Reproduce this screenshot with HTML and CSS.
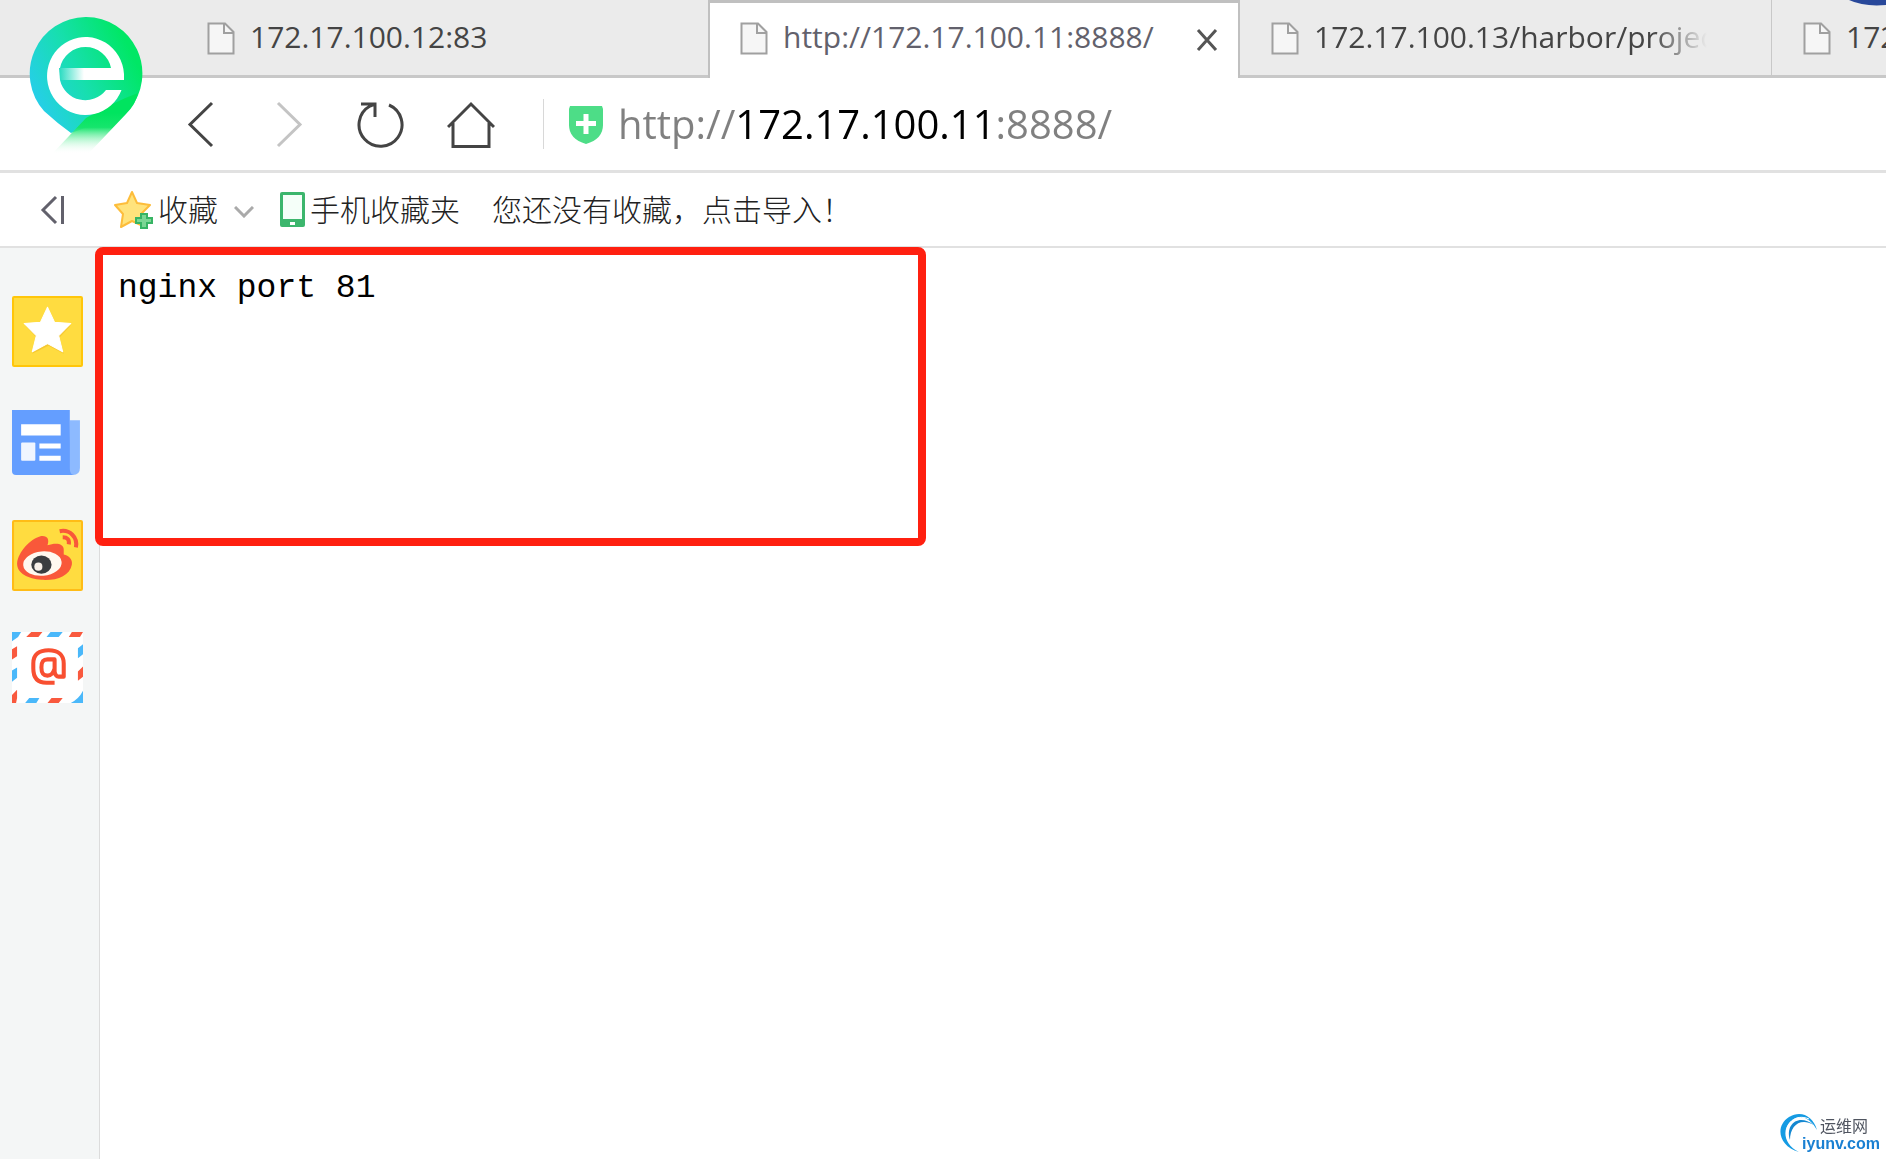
FILE: index.html
```html
<!DOCTYPE html>
<html lang="zh-CN">
<head>
<meta charset="utf-8">
<meta name="viewport" content="width=device-width, initial-scale=1">
<title>http://172.17.100.11:8888/</title>
<link rel="stylesheet" href="styles.css">
</head>
<body>
<svg class="defs" width="0" height="0" aria-hidden="true">
  <symbol id="file" viewBox="0 0 28 33">
    <path d="M1.500 1.500H18L26.500 10V31.500H1.500Z" fill="#f6f6f6" stroke="#a0a0a0" stroke-width="2"/>
    <path d="M17 2V11H26" fill="none" stroke="#a0a0a0" stroke-width="2"/>
  </symbol>
</svg>

<header class="browser">
  <svg class="logo" viewBox="0 0 116 144" role="img" aria-label="浏览器">
    <defs>
      <linearGradient id="pin" x1="0" y1="1" x2="1" y2="0.500">
        <stop offset="0" stop-color="#2cc8ff"/><stop offset="0.550" stop-color="#17dfae"/><stop offset="1" stop-color="#00e765"/>
      </linearGradient>
      <linearGradient id="tail" x1="0" y1="96" x2="0" y2="137" gradientUnits="userSpaceOnUse">
        <stop offset="0" stop-color="#00e45f"/><stop offset="0.350" stop-color="#16e56c"/><stop offset="1" stop-color="#fff" stop-opacity="0"/>
      </linearGradient>
      <linearGradient id="bar" x1="0" x2="1"><stop offset="0" stop-color="#25dbc0"/><stop offset="1" stop-color="#fff"/></linearGradient>
    </defs>
    <path d="M57.500 0A56.500 56.500 0 0 1 101 93Q90 104 76 104L43 116Q29 106 16 94A56.500 56.500 0 0 1 57.500 0Z" fill="url(#pin)"/>
    <path d="M58 101Q88 84 110 76Q108 87 98 97L60 137H24Z" fill="url(#tail)"/>
    <path fill-rule="evenodd" fill="#fff" d="M96 63V57A38.500 39 0 1 0 93.500 73H78A26 26 0 0 1 32 63ZM32 51A26 26 0 0 1 83 51Z"/>
    <path d="M31 51H56V63H32Z" fill="url(#bar)"/>
  </svg>
  <svg class="avatar" viewBox="0 0 40 6" aria-hidden="true"><path d="M3 0Q18 7 40 5V0Z" fill="#28489a"/></svg>

  <nav class="tabs">
    <a class="tab first" href="#"><svg class="page"><use href="#file"/></svg><span class="title">172.17.100.12:83</span></a>
    <div class="tab active">
      <svg class="page"><use href="#file"/></svg><span class="title">http://172.17.100.11:8888/</span>
      <button class="close" aria-label="关闭标签页"><svg viewBox="0 0 22 22"><path d="M2 1L20 21M20 1L2 21" stroke="#555" stroke-width="3" fill="none"/></svg></button>
    </div>
    <a class="tab long" href="#"><svg class="page"><use href="#file"/></svg><span class="title fade">172.17.100.13/harbor/projects</span></a>
    <a class="tab last" href="#"><svg class="page"><use href="#file"/></svg><span class="title">172.17.100.14</span></a>
  </nav>

  <div class="toolbar">
    <div class="buttons">
      <button aria-label="后退"><svg viewBox="0 0 48 48"><path d="M38 3L16 24.500L38 46"/></svg></button>
      <button aria-label="前进" disabled><svg viewBox="0 0 48 48"><path d="M13 3L35 24.500L13 46"/></svg></button>
      <button aria-label="刷新"><svg viewBox="0 0 48 48"><path d="M33 5A21.500 21.500 0 1 1 14 6L19 4M5 4H19V17"/></svg></button>
      <button aria-label="主页"><svg viewBox="0 0 48 48"><path d="M1 27L24 4L47 27M6 23V46.500H42V23"/></svg></button>
    </div>
    <div class="address">
      <svg class="shield" viewBox="0 0 36 39" aria-hidden="true"><path d="M2 1H34L35 4V20Q35 34 18 39Q1 34 1 20V4Z" fill="#4ddd87"/><path d="M18 9V29M8 18.500H28" stroke="#fff" stroke-width="5"/></svg>
      <input class="url" type="text" aria-label="地址" value="http://172.17.100.11:8888/">
    </div>
  </div>

  <div class="bookmarks">
    <button class="collapse" aria-label="收起"><svg viewBox="0 0 26 30"><path d="M16 2L3 15L16 28" fill="none" stroke="#62616c" stroke-width="3"/><path d="M22.500 1V29" stroke="#62616c" stroke-width="3"/></svg></button>
    <button class="mark fav">
      <svg class="star" viewBox="0 0 40 40" aria-hidden="true"><path d="M18 2L23 13L36 15L27 24L29 36L18 31L7 37L9 24L1 15L13 13Z" fill="#ffe37c" stroke="#fdbd3b" stroke-width="2" stroke-linejoin="round"/><path d="M27 24H33V28H38V33H33V38H27V33H22V28H27Z" fill="#7bd694" stroke="#37b464" stroke-width="2"/></svg>
      <span>收藏</span>
      <svg class="chevron" viewBox="0 0 20 12" aria-hidden="true"><path d="M1 1L10 10L19 1" fill="none" stroke="#aaa" stroke-width="3"/></svg>
    </button>
    <button class="mark mobile">
      <svg class="phone" viewBox="0 0 25 35" aria-hidden="true"><rect width="25" height="35" rx="2" fill="#3cb66d"/><rect x="3" y="3" width="19" height="24" fill="#f5fff9"/><rect x="10" y="30" width="5" height="3" fill="#fff"/></svg>
      <span>手机收藏夹</span>
    </button>
    <a class="mark import" href="#">您还没有收藏，点击导入！</a>
  </div>
</header>

<div class="body">
  <aside class="side">
    <button aria-label="收藏夹"><svg viewBox="0 0 70 70"><rect x="1" y="1" width="68" height="68" rx="1" fill="#ffdc40" stroke="#ffc60a" stroke-width="2"/><path d="M36 14L42 27L58 29L47 41L51 57L36 49L20 57L24 41L13 29L29 27Z" fill="#e9ad1c" opacity=".4"/><path d="M35 11L42 26L58 27L46 39L50 55L35 47L20 55L24 39L12 27L28 26Z" fill="#fff" stroke="#fff" stroke-linejoin="round"/></svg></button>
    <button aria-label="新闻"><svg viewBox="0 0 70 70"><path d="M57 12H67V59Q67 66 60 66H55Z" fill="#8dbaff"/><path d="M0 2H57V60Q57 66 61 66H4Q0 66 0 62Z" fill="#649eff"/><path d="M9 16H48V27H9ZM27 35H48V40H27ZM27 47H48V52H27Z" fill="#fff"/><rect x="9" y="34" width="14" height="18" rx="1" fill="#f0f5ff"/></svg></button>
    <button aria-label="微博"><svg viewBox="0 0 70 70"><rect x="1" y="1" width="68" height="68" rx="1" fill="#ffdc40" stroke="#ffbc16" stroke-width="2"/><path d="M5 43C6 31 18 19 28 16C35 15 37 19 35 25C43 22 51 23 51 29V34C56 35 60 39 59 44C57 55 44 60 29 59C16 58 5 53 5 43Z" fill="#f9583a"/><ellipse cx="30" cy="43" rx="19" ry="12" fill="#fff8ef" transform="rotate(-5 30 43)"/><ellipse cx="29" cy="44" rx="10" ry="9" fill="#3b3d40"/><circle cx="26" cy="46" r="4" fill="#f8f0e8"/><path d="M47 11C57 9 65 17 63 27M50 17Q57 17 56 24" fill="none" stroke="#f9583a" stroke-width="4"/></svg></button>
    <button aria-label="邮箱"><svg viewBox="0 0 70 70"><rect width="70" height="70" fill="#fff"/><path d="M0 0H9L6 5L0 9ZM38 0H50L46 5H34ZM70 12V22L65 26V16ZM0 38L5 35V45L0 49ZM17 65H27L24 70H13ZM70 58V70H58Q66 66 70 58Z" fill="#4ab8fa"/><path d="M19 0H30L26 5H14ZM59 0H70L67 5H56ZM70 34V44L65 48V39ZM0 17L5 14V24L0 27ZM0 62L5 57V65L4 70H0ZM39 65H50L46 70H35Z" fill="#f9593e"/><path d="M42 50H34C24 50 21 44 21 36V31C21 22 27 18 36 18C46 18 51 23 51 31V44H46Q43 44 42 39V27H35C30 27 29 30 29 35C29 41 31 43 35 43C39 43 41 40 42 36" fill="none" stroke="#f84f31" stroke-width="4" stroke-linejoin="round"/></svg></button>
  </aside>
  <main class="content">
    <pre>nginx port 81</pre>
    <div class="highlight"></div>
  </main>
</div>

<a class="watermark" href="#">
  <svg viewBox="0 0 38 40" aria-hidden="true"><path d="M19 39C-2 33-5 13 9 4C21-3 33 3 37 17C30 4 19 0 10 9C2 17 4 32 19 39Z" fill="#159be3"/><path d="M7 24C4 11 15 0 29 6" fill="none" stroke="#fff"/><path d="M10 27C5 12 18 0 34 12C20 4 10 13 10 27Z" fill="#1488d1"/></svg>
  <span class="cn">运维网</span>
  <span class="en">iyunv.com</span>
</a>
</body>
</html>
```
FILE: styles.css
```css
* { box-sizing: border-box; }
body {
  margin: 0;
  min-height: 100vh;
  display: flex;
  flex-direction: column;
  background: #fff;
  color: #444;
  font-family: "Open Sans", "Noto Sans CJK SC", sans-serif;
  font-size: 30px;
  overflow: hidden;
}
button {
  display: flex;
  align-items: center;
  padding: 0;
  border: 0;
  background: none;
  color: inherit;
  font: inherit;
}
a { color: inherit; text-decoration: none; }
svg { display: block; flex: none; }
.defs { position: absolute; }
.browser { position: relative; }
.logo { position: absolute; left: 28px; top: 17px; width: 116px; height: 144px; }
.avatar { position: absolute; right: 0; top: 0; width: 40px; height: 6px; }

/* Tab strip */
.tabs { display: flex; height: 78px; background: #ebebeb; overflow: hidden; }
.tab {
  display: flex;
  flex: none;
  gap: 15px;
  width: 532px;
  padding: 16px 32px 0 31px;
  line-height: 42px;
  border-bottom: 3px solid #c8c8c8;
}
.page { width: 28px; height: 33px; margin-top: 6px; }
.title { white-space: nowrap; }
.tab.first { padding-left: 207px; width: 708px; }
.tab.active {
  padding: 13px 20px 0 30px;
  color: #62616c;
  background: #fff;
  border: 2px solid #c0c0c0;
  border-top-width: 3px;
  border-bottom: 0;
}
.close { margin: 13px 0 0 auto; height: 22px; }
.close svg { width: 22px; height: 22px; }
.fade {
  flex: 1;
  overflow: hidden;
  -webkit-mask-image: linear-gradient(to right, #000 86%, transparent);
  mask-image: linear-gradient(to right, #000 86%, transparent);
}
.tab.long { padding-right: 64px; border-right: 1px solid #c8c8c8; }

/* Toolbar */
.toolbar { display: flex; align-items: center; height: 95px; padding-left: 174px; border-bottom: 3px solid #e1e1e1; }
.buttons { display: flex; gap: 43px; padding-right: 48px; border-right: 1px solid #d8d8d8; height: 50px; align-items: center; }
.buttons svg { width: 48px; height: 48px; fill: none; stroke: #444; stroke-width: 3; }
.buttons button:disabled svg { stroke: #c4c4c4; }
.address { display: flex; flex: 1; align-items: center; padding-left: 24px; gap: 14px; }
.shield { width: 36px; height: 39px; }
.url {
  flex: 1;
  min-width: 0;
  height: 60px;
  padding: 0 0 2px;
  border: 0;
  outline: 0;
  font: inherit;
  font-size: 40px;
  color: transparent;
  background: linear-gradient(to right, #808080 118px, #000 118px, #000 379px, #808080 379px);
  -webkit-background-clip: text;
  background-clip: text;
}

/* Bookmarks bar */
.bookmarks {
  display: flex;
  align-items: center;
  height: 75px;
  padding-left: 40px;
  border-bottom: 2px solid #e1e1e1;
  color: #222;
  font-family: "Noto Sans CJK SC", sans-serif;
  font-weight: 300;
  line-height: 44px;
  white-space: nowrap;
}
.mark span, .import { padding-bottom: 4px; }
.collapse svg { width: 26px; height: 30px; }
.fav { margin-left: 48px; }
.star { width: 40px; height: 40px; margin-right: 4px; }
.chevron { width: 20px; height: 12px; margin: 4px 0 0 16px; }
.mobile { margin-left: 26px; gap: 5px; }
.phone { width: 25px; height: 35px; }
.import { margin-left: 32px; }

/* Page area */
.body { display: flex; flex: 1; }
.side {
  display: flex;
  flex-direction: column;
  flex: none;
  gap: 41px;
  width: 100px;
  padding: 48px 0 0 12px;
  background: #f4f6f6;
  border-right: 1px solid #dcdcdc;
}
.side svg { width: 71px; height: 71px; }
.content { position: relative; flex: 1; padding: 20px 18px; }
pre { margin: 0; color: #000; font-family: "Liberation Mono", monospace; font-size: 33px; line-height: 42px; }
.highlight {
  position: absolute;
  left: -5px;
  top: -1px;
  width: 831px;
  height: 299px;
  border: 8px solid #ff2010;
  border-radius: 8px;
}

.watermark {
  position: fixed;
  right: 6px;
  bottom: 6px;
  display: grid;
  grid-template-columns: 22px auto;
  color: #505560;
}
.watermark svg { position: absolute; left: 0; top: -2px; width: 38px; height: 40px; }
.cn { grid-column: 2; padding-left: 18px; font: 16px/20px "Noto Sans CJK SC", sans-serif; }
.en { grid-column: 2; color: #1a80d2; font: bold 16px/18px "Liberation Sans", sans-serif; }
```
